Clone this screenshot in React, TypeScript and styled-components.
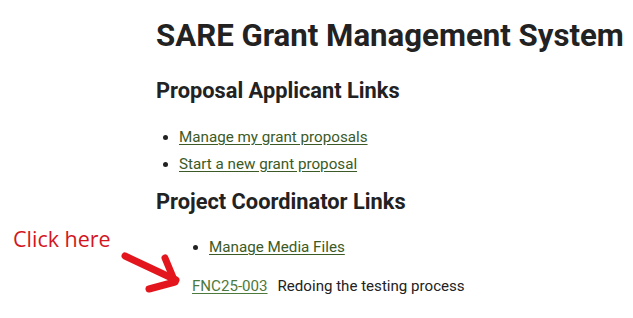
import styled, { createGlobalStyle } from "styled-components";

const GlobalStyle = createGlobalStyle`
    html, body {
        margin: 0;
        padding: 0;
        background: #ffffff;
    }
    body {
        font-family: Roboto, "Liberation Sans", sans-serif;
        color: #212121;
    }
`;

const coordinatorLinks = ["Manage Media Files"];
const applicantLinks = ["Manage my grant proposals", "Start a new grant proposal"];

export default function App() {
    return (
        <>
            <GlobalStyle />
            <Page>
                <Main>
                    <Title>SARE Grant Management System</Title>
                    <SectionTitle>Proposal Applicant Links</SectionTitle>
                    <LinkList>
                        {applicantLinks.map((label) => (
                            <LinkItem key={label}>
                                <PageLink href="#">{label}</PageLink>
                            </LinkItem>
                        ))}
                    </LinkList>
                    <SectionTitle>Project Coordinator Links</SectionTitle>
                    <LinkList $indent={53} $top={21}>
                        {coordinatorLinks.map((label) => (
                            <LinkItem key={label}>
                                <PageLink href="#">{label}</PageLink>
                            </LinkItem>
                        ))}
                    </LinkList>
                    <ProjectRow>
                        <ProjectLink href="#">FNC25-003</ProjectLink>
                        <span>Redoing the testing process</span>
                    </ProjectRow>
                </Main>
                <Callout>
                    <CalloutText>Click here</CalloutText>
                    <Arrow width="80" height="50" viewBox="0 0 80 50">
                        <g stroke="#e3161d" strokeWidth="7" strokeLinecap="round" strokeLinejoin="round" fill="none">
                            <path d="M6 5 L57 29" />
                            <path d="M46 7 L56 31 L30 38" />
                        </g>
                    </Arrow>
                </Callout>
            </Page>
        </>
    );
}

const Page = styled.div`
    position: relative;
    width: 633px;
    height: 318px;
    overflow: hidden;
`;

const Main = styled.div`
    display: flex;
    flex-direction: column;
    padding: 18px 0 0 156px;
`;

const Title = styled.h1`
    margin: 0;
    font-size: 31.2px;
    font-weight: 700;
    line-height: 36px;
    color: #222222;
`;

const SectionTitle = styled.h2`
    margin: 0;
    font-size: 21.8px;
    font-weight: 700;
    line-height: 28px;
    color: #222222;
    &:first-of-type {
        margin-top: 23px;
    }
    &:not(:first-of-type) {
        margin-top: 14px;
    }
`;

const LinkList = styled.ul<{ $indent?: number; $top?: number }>`
    margin: ${(p) => p.$top ?? 22}px 0 0 0;
    padding-left: ${(p) => p.$indent ?? 23}px;
    display: flex;
    flex-direction: column;
    row-gap: 7px;
    font-size: 15.2px;
    line-height: 20px;
`;

const LinkItem = styled.li`
    &::marker {
        color: #222222;
    }
`;

const PageLink = styled.a`
    color: #3b5a26;
    text-decoration: underline;
    text-underline-offset: 2px;
`;

const ProjectRow = styled.div`
    margin: 19px 0 0 36px;
    display: flex;
    column-gap: 10px;
    font-size: 15.1px;
    line-height: 20px;
    color: #222222;
`;

const ProjectLink = styled.a`
    color: #4c7a3c;
    text-decoration: underline;
    text-underline-offset: 2px;
`;

const Callout = styled.div`
    position: absolute;
    left: 13px;
    top: 224px;
`;

const CalloutText = styled.div`
    font-family: "Open Sans", "Noto Sans", sans-serif;
    font-size: 21.5px;
    line-height: 30px;
    color: #d3161e;
`;

const Arrow = styled.svg`
    position: absolute;
    left: 106px;
    top: 27px;
`;
